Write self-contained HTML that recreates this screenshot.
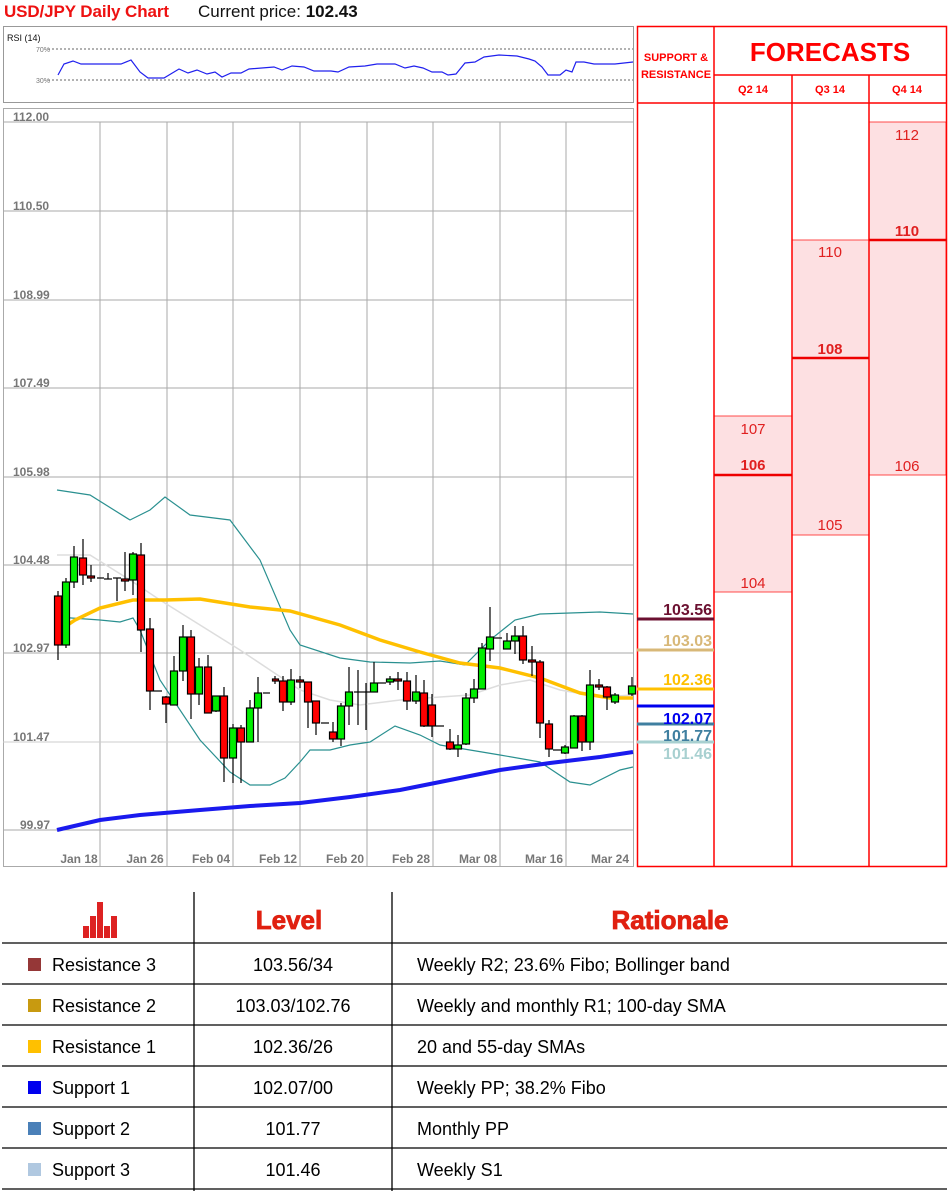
<!DOCTYPE html>
<html><head><meta charset="utf-8"><style>
html,body{margin:0;padding:0;background:#fff;}
svg{display:block;font-family:"Liberation Sans",sans-serif;}
</style></head><body>
<svg width="949" height="1191" viewBox="0 0 949 1191" xmlns="http://www.w3.org/2000/svg">
<!-- title -->
<text x="4" y="17" font-size="17" font-weight="bold" fill="#ee1111" textLength="165">USD/JPY Daily Chart</text>
<text x="198" y="17" font-size="17" fill="#111">Current price: <tspan font-weight="bold">102.43</tspan></text>
<!-- RSI -->
<rect x="3.5" y="26.5" width="630" height="76" fill="#fff" stroke="#999"/>
<text x="7" y="41" font-size="9" fill="#111">RSI (14)</text>
<text x="36" y="52" font-size="7" fill="#777">70%</text>
<text x="36" y="83" font-size="7" fill="#777">30%</text>
<line x1="48" y1="49" x2="633" y2="49" stroke="#666" stroke-dasharray="2,2"/>
<line x1="48" y1="80" x2="633" y2="80" stroke="#666" stroke-dasharray="2,2"/>
<polyline fill="none" stroke="#2020ee" stroke-width="1.2" points="58,75 64,64 73,61 81,64 121,64 131,60 140,72 148,78 164,78 179,69 188,73 197,70 207,74 215,72 222,77 231,73 241,73 249,69 274,67 282,70 292,66 304,67 314,71 331,71 338,72 349,67 365,66 377,64 395,64 405,68 414,66 423,68 432,72 442,72 448,75 456,74 465,63 475,62 484,57 499,55 517,56 529,59 535,61 542,67 548,75 560,75 566,70 572,72 576,62 584,62 594,64 615,64 633,62"/>
<!-- main chart -->
<rect x="3.5" y="108.5" width="630" height="758" fill="#fff" stroke="#aaa"/>
<g stroke="#aaa">
<line x1="100" y1="122" x2="100" y2="866"/><line x1="167" y1="122" x2="167" y2="866"/><line x1="233" y1="122" x2="233" y2="866"/>
<line x1="300" y1="122" x2="300" y2="866"/><line x1="367" y1="122" x2="367" y2="866"/><line x1="433" y1="122" x2="433" y2="866"/>
<line x1="500" y1="122" x2="500" y2="866"/><line x1="566" y1="122" x2="566" y2="866"/>
<line x1="3" y1="122" x2="633" y2="122"/><line x1="3" y1="211" x2="633" y2="211"/><line x1="3" y1="300" x2="633" y2="300"/>
<line x1="3" y1="388" x2="633" y2="388"/><line x1="3" y1="477" x2="633" y2="477"/><line x1="3" y1="565" x2="633" y2="565"/>
<line x1="3" y1="653" x2="633" y2="653"/><line x1="3" y1="742" x2="633" y2="742" stroke="#ccc"/><line x1="3" y1="830" x2="633" y2="830"/>
</g>
<g font-size="12" font-weight="bold" fill="#777">
<text x="13" y="121">112.00</text><text x="13" y="210">110.50</text><text x="13" y="299">108.99</text>
<text x="13" y="387">107.49</text><text x="13" y="476">105.98</text><text x="13" y="564">104.48</text>
<text x="13" y="652">102.97</text><text x="13" y="741">101.47</text><text x="20" y="829">99.97</text>
</g>
<g font-size="12" font-weight="bold" fill="#777" text-anchor="middle">
<text x="79" y="863">Jan 18</text><text x="145" y="863">Jan 26</text><text x="211" y="863">Feb 04</text>
<text x="278" y="863">Feb 12</text><text x="345" y="863">Feb 20</text><text x="411" y="863">Feb 28</text>
<text x="478" y="863">Mar 08</text><text x="544" y="863">Mar 16</text><text x="610" y="863">Mar 24</text>
</g>
<!-- indicators -->
<polyline fill="none" stroke="#ddd" stroke-width="1.5" points="57,555 90,555 130,580 160,600 200,625 240,650 270,670 300,690 330,700 360,705 400,700 440,697 470,695 500,685 530,680 560,690 600,697 633,695"/>
<polyline fill="none" stroke="#2a9090" stroke-width="1.2" points="57,490 90,495 130,520 150,510 165,497 190,515 230,520 260,560 290,630 300,645 340,658 370,662 410,663 440,661 465,665 490,640 515,620 540,614 600,612 633,614"/>
<polyline fill="none" stroke="#2a9090" stroke-width="1.2" points="57,617 100,620 120,622 133,618 140,630 160,680 200,740 230,772 250,785 270,785 285,778 300,762 310,750 330,750 350,745 370,742 395,726 420,735 440,745 470,750 500,755 540,762 570,782 590,785 620,770 633,767"/>
<polyline fill="none" stroke="#ffc000" stroke-width="3.5" points="57,632 75,620 100,608 133,600 165,600 200,599 250,607 290,611 340,625 380,640 420,652 460,663 500,668 540,678 580,693 610,698 633,698"/>
<polyline fill="none" stroke="#1a1aee" stroke-width="4" points="57,830 100,820 140,815 200,810 250,806 300,803 350,797 400,790 450,780 500,770 550,763 600,757 633,752"/>
<!-- candles -->
<g stroke="#000" stroke-width="1.2">
<line x1="58" y1="591" x2="58" y2="660"/><rect x="54.5" y="596" width="7" height="49" fill="#f00"/>
<line x1="66" y1="578" x2="66" y2="648"/><rect x="62.5" y="582" width="7" height="63" fill="#0e0"/>
<line x1="74" y1="546" x2="74" y2="588"/><rect x="70.5" y="557" width="7" height="25" fill="#0e0"/>
<line x1="83" y1="539" x2="83" y2="585"/><rect x="79.5" y="558" width="7" height="17" fill="#f00"/>
<line x1="91" y1="565" x2="91" y2="582"/><rect x="87.5" y="576" width="7" height="2" fill="#f00"/>
<line x1="97" y1="578" x2="104" y2="578"/>
<line x1="108" y1="573" x2="108" y2="579"/><line x1="104" y1="579" x2="112" y2="579"/>
<line x1="117" y1="578" x2="117" y2="601"/><line x1="113" y1="578" x2="121" y2="578"/>
<line x1="125" y1="552" x2="125" y2="591"/><rect x="121.5" y="579" width="7" height="2" fill="#f00"/>
<line x1="133" y1="552" x2="133" y2="595"/><rect x="129.5" y="554" width="7" height="26" fill="#0e0"/>
<line x1="141" y1="543" x2="141" y2="652"/><rect x="137.5" y="555" width="7" height="75" fill="#f00"/>
<line x1="150" y1="618" x2="150" y2="710"/><rect x="146.5" y="629" width="7" height="62" fill="#f00"/>
<line x1="154" y1="691" x2="162" y2="691"/>
<line x1="166" y1="696" x2="166" y2="723"/><rect x="162.5" y="697" width="7" height="7" fill="#f00"/>
<line x1="174" y1="656" x2="174" y2="705"/><rect x="170.5" y="671" width="7" height="34" fill="#0e0"/>
<line x1="183" y1="625" x2="183" y2="681"/><rect x="179.5" y="637" width="7" height="34" fill="#0e0"/>
<line x1="191" y1="630" x2="191" y2="719"/><rect x="187.5" y="637" width="7" height="57" fill="#f00"/>
<line x1="199" y1="658" x2="199" y2="705"/><rect x="195.5" y="667" width="7" height="27" fill="#0e0"/>
<line x1="208" y1="655" x2="208" y2="713"/><rect x="204.5" y="667" width="7" height="46" fill="#f00"/>
<line x1="216" y1="696" x2="216" y2="712"/><rect x="212.5" y="696" width="7" height="15" fill="#0e0"/>
<line x1="224" y1="687" x2="224" y2="782"/><rect x="220.5" y="696" width="7" height="62" fill="#f00"/>
<line x1="233" y1="724" x2="233" y2="783"/><rect x="229.5" y="728" width="7" height="30" fill="#0e0"/>
<line x1="241" y1="725" x2="241" y2="783"/><rect x="237.5" y="728" width="7" height="14" fill="#f00"/>
<line x1="250" y1="700" x2="250" y2="742"/><rect x="246.5" y="708" width="7" height="34" fill="#0e0"/>
<line x1="258" y1="677" x2="258" y2="742"/><rect x="254.5" y="693" width="7" height="15" fill="#0e0"/>
<line x1="263" y1="693" x2="270" y2="693"/>
<line x1="275" y1="676" x2="275" y2="684"/><rect x="272.5" y="679" width="6" height="2" fill="#f00"/>
<line x1="283" y1="676" x2="283" y2="711"/><rect x="279.5" y="681" width="7" height="21" fill="#f00"/>
<line x1="291" y1="669" x2="291" y2="705"/><rect x="287.5" y="680" width="7" height="22" fill="#0e0"/>
<line x1="300" y1="676" x2="300" y2="688"/><rect x="296.5" y="680" width="7" height="2" fill="#f00"/>
<line x1="308" y1="682" x2="308" y2="728"/><rect x="304.5" y="682" width="7" height="20" fill="#f00"/>
<line x1="316" y1="701" x2="316" y2="735"/><rect x="312.5" y="701" width="7" height="22" fill="#f00"/>
<line x1="321" y1="723" x2="329" y2="723"/>
<line x1="333" y1="722" x2="333" y2="742"/><rect x="329.5" y="732" width="7" height="7" fill="#f00"/>
<line x1="341" y1="703" x2="341" y2="746"/><rect x="337.5" y="706" width="7" height="33" fill="#0e0"/>
<line x1="349" y1="667" x2="349" y2="725"/><rect x="345.5" y="692" width="7" height="14" fill="#0e0"/>
<line x1="358" y1="670" x2="358" y2="725"/><line x1="354" y1="692" x2="362" y2="692"/>
<line x1="366" y1="683" x2="366" y2="730"/><line x1="362" y1="692" x2="370" y2="692"/>
<line x1="374" y1="662" x2="374" y2="692"/><rect x="370.5" y="683" width="7" height="9" fill="#0e0"/>
<line x1="378" y1="683" x2="386" y2="683"/>
<line x1="390" y1="676" x2="390" y2="685"/><rect x="386.5" y="679" width="7" height="3" fill="#0e0"/>
<line x1="398" y1="672" x2="398" y2="690"/><rect x="394.5" y="679" width="7" height="2" fill="#f00"/>
<line x1="407" y1="672" x2="407" y2="710"/><rect x="403.5" y="681" width="7" height="20" fill="#f00"/>
<line x1="416" y1="675" x2="416" y2="704"/><rect x="412.5" y="692" width="7" height="9" fill="#0e0"/>
<line x1="424" y1="680" x2="424" y2="727"/><rect x="420.5" y="693" width="7" height="33" fill="#f00"/>
<line x1="432" y1="694" x2="432" y2="737"/><rect x="428.5" y="705" width="7" height="21" fill="#f00"/>
<line x1="436" y1="726" x2="444" y2="726"/>
<line x1="450" y1="729" x2="450" y2="750"/><rect x="446.5" y="742" width="7" height="7" fill="#f00"/>
<line x1="458" y1="735" x2="458" y2="757"/><rect x="454.5" y="745" width="7" height="4" fill="#0e0"/>
<line x1="466" y1="693" x2="466" y2="745"/><rect x="462.5" y="698" width="7" height="46" fill="#0e0"/>
<line x1="474" y1="679" x2="474" y2="703"/><rect x="470.5" y="689" width="7" height="9" fill="#0e0"/>
<line x1="482" y1="643" x2="482" y2="689"/><rect x="478.5" y="648" width="7" height="41" fill="#0e0"/>
<line x1="490" y1="607" x2="490" y2="661"/><rect x="486.5" y="637" width="7" height="12" fill="#0e0"/>
<line x1="494" y1="638" x2="502" y2="638"/>
<line x1="507" y1="633" x2="507" y2="649"/><rect x="503.5" y="641" width="7" height="8" fill="#0e0"/>
<line x1="515" y1="626" x2="515" y2="654"/><rect x="511.5" y="636" width="7" height="5" fill="#0e0"/>
<line x1="523" y1="626" x2="523" y2="664"/><rect x="519.5" y="636" width="7" height="24" fill="#f00"/>
<line x1="532" y1="646" x2="532" y2="676"/><rect x="528.5" y="660" width="7" height="2" fill="#f00"/>
<line x1="540" y1="660" x2="540" y2="738"/><rect x="536.5" y="662" width="7" height="61" fill="#f00"/>
<line x1="549" y1="720" x2="549" y2="757"/><rect x="545.5" y="724" width="7" height="25" fill="#f00"/>
<line x1="553" y1="750" x2="561" y2="750"/>
<line x1="565" y1="745" x2="565" y2="754"/><rect x="561.5" y="747" width="7" height="6" fill="#0e0"/>
<line x1="574" y1="715" x2="574" y2="748"/><rect x="570.5" y="716" width="7" height="32" fill="#0e0"/>
<line x1="582" y1="715" x2="582" y2="751"/><rect x="578.5" y="716" width="7" height="26" fill="#f00"/>
<line x1="590" y1="670" x2="590" y2="750"/><rect x="586.5" y="685" width="7" height="57" fill="#0e0"/>
<line x1="599" y1="679" x2="599" y2="690"/><rect x="595.5" y="685" width="7" height="2" fill="#f00"/>
<line x1="607" y1="686" x2="607" y2="710"/><rect x="603.5" y="687" width="7" height="10" fill="#f00"/>
<line x1="615" y1="693" x2="615" y2="704"/><rect x="611.5" y="695" width="7" height="7" fill="#0e0"/>
<line x1="632" y1="677" x2="632" y2="696"/><rect x="628.5" y="686" width="7" height="8" fill="#0e0"/>
</g>
<!-- forecasts panel -->
<rect x="714" y="416" width="78" height="176" fill="#fde0e2" stroke="#f22" stroke-width="0.8"/>
<rect x="792" y="240" width="77" height="295" fill="#fde0e2" stroke="#f22" stroke-width="0.8"/>
<rect x="869" y="122" width="77" height="353" fill="#fde0e2" stroke="#f22" stroke-width="0.8"/>
<g stroke="#f00" stroke-width="1.5" fill="none">
<rect x="637.5" y="26.5" width="309" height="840"/>
<line x1="714" y1="26" x2="714" y2="867"/>
<line x1="792" y1="75" x2="792" y2="867"/>
<line x1="869" y1="75" x2="869" y2="867"/>
<line x1="714" y1="75" x2="947" y2="75"/>
<line x1="637" y1="103" x2="947" y2="103"/>
</g>
<g stroke="#e00" stroke-width="2.5">
<line x1="714" y1="475" x2="792" y2="475"/>
<line x1="792" y1="358" x2="869" y2="358"/>
<line x1="869" y1="240" x2="947" y2="240"/>
</g>
<g fill="#f00" font-weight="bold" text-anchor="middle">
<text x="676" y="61" font-size="11">SUPPORT &amp;</text>
<text x="676" y="78" font-size="11">RESISTANCE</text>
<text x="830" y="61" font-size="26">FORECASTS</text>
<text x="753" y="93" font-size="11">Q2 14</text>
<text x="830" y="93" font-size="11">Q3 14</text>
<text x="907" y="93" font-size="11">Q4 14</text>
</g>
<g fill="#e02020" font-size="15" text-anchor="middle">
<text x="753" y="434">107</text><text x="753" y="470" font-weight="bold">106</text><text x="753" y="588">104</text>
<text x="830" y="257">110</text><text x="830" y="354" font-weight="bold">108</text><text x="830" y="530">105</text>
<text x="907" y="140">112</text><text x="907" y="236" font-weight="bold">110</text><text x="907" y="471">106</text>
</g>
<!-- support/resistance -->
<g stroke-width="3">
<line x1="637" y1="619" x2="714" y2="619" stroke="#6b1030"/>
<line x1="637" y1="650" x2="714" y2="650" stroke="#d8b878"/>
<line x1="637" y1="689" x2="714" y2="689" stroke="#ffc000"/>
<line x1="637" y1="706" x2="714" y2="706" stroke="#0000ee"/>
<line x1="637" y1="724" x2="714" y2="724" stroke="#3f7fa0"/>
<line x1="637" y1="742" x2="714" y2="742" stroke="#a8d0d0"/>
</g>
<g font-size="16" font-weight="bold" text-anchor="end">
<text x="712" y="615" fill="#6b1030">103.56</text>
<text x="712" y="646" fill="#d8b878">103.03</text>
<text x="712" y="685" fill="#ffc000">102.36</text>
<text x="712" y="724" fill="#0000ee">102.07</text>
<text x="712" y="741" fill="#3f7fa0">101.77</text>
<text x="712" y="759" fill="#a8d0d0">101.46</text>
</g>
<!-- table -->
<g fill="#dd2222">
<rect x="83" y="926" width="6" height="12"/><rect x="90" y="916" width="6" height="22"/>
<rect x="97" y="902" width="6" height="36"/><rect x="104" y="926" width="6" height="12"/>
<rect x="111" y="916" width="6" height="22"/>
</g>
<g stroke="#000" stroke-width="1.3">
<line x1="194" y1="892" x2="194" y2="1191"/>
<line x1="392" y1="892" x2="392" y2="1191"/>
<line x1="2" y1="943" x2="947" y2="943"/><line x1="2" y1="984" x2="947" y2="984"/>
<line x1="2" y1="1025" x2="947" y2="1025"/><line x1="2" y1="1066" x2="947" y2="1066"/>
<line x1="2" y1="1107" x2="947" y2="1107"/><line x1="2" y1="1148" x2="947" y2="1148"/>
<line x1="2" y1="1189" x2="947" y2="1189"/>
</g>
<text x="289" y="929" font-size="26" font-weight="bold" fill="#e02010" text-anchor="middle" stroke="#e02010" stroke-width="0.8">Level</text>
<text x="670" y="929" font-size="26" font-weight="bold" fill="#e02010" text-anchor="middle" stroke="#e02010" stroke-width="0.8">Rationale</text>
<rect x="28" y="958" width="13" height="13" fill="#953737"/>
<rect x="28" y="999" width="13" height="13" fill="#c89a10"/>
<rect x="28" y="1040" width="13" height="13" fill="#ffc000"/>
<rect x="28" y="1081" width="13" height="13" fill="#0000ee"/>
<rect x="28" y="1122" width="13" height="13" fill="#4a80b8"/>
<rect x="28" y="1163" width="13" height="13" fill="#b0c8e0"/>
<g font-size="18" fill="#000">
<text x="52" y="971">Resistance 3</text><text x="52" y="1012">Resistance 2</text><text x="52" y="1053">Resistance 1</text>
<text x="52" y="1094">Support 1</text><text x="52" y="1135">Support 2</text><text x="52" y="1176">Support 3</text>
<g text-anchor="middle">
<text x="293" y="971">103.56/34</text><text x="293" y="1012">103.03/102.76</text><text x="293" y="1053">102.36/26</text>
<text x="293" y="1094">102.07/00</text><text x="293" y="1135">101.77</text><text x="293" y="1176">101.46</text>
</g>
<text x="417" y="971">Weekly R2; 23.6% Fibo; Bollinger band</text>
<text x="417" y="1012">Weekly and monthly R1; 100-day SMA</text>
<text x="417" y="1053">20 and 55-day SMAs</text>
<text x="417" y="1094">Weekly PP; 38.2% Fibo</text>
<text x="417" y="1135">Monthly PP</text>
<text x="417" y="1176">Weekly S1</text>
</g>
</svg>
</body></html>
